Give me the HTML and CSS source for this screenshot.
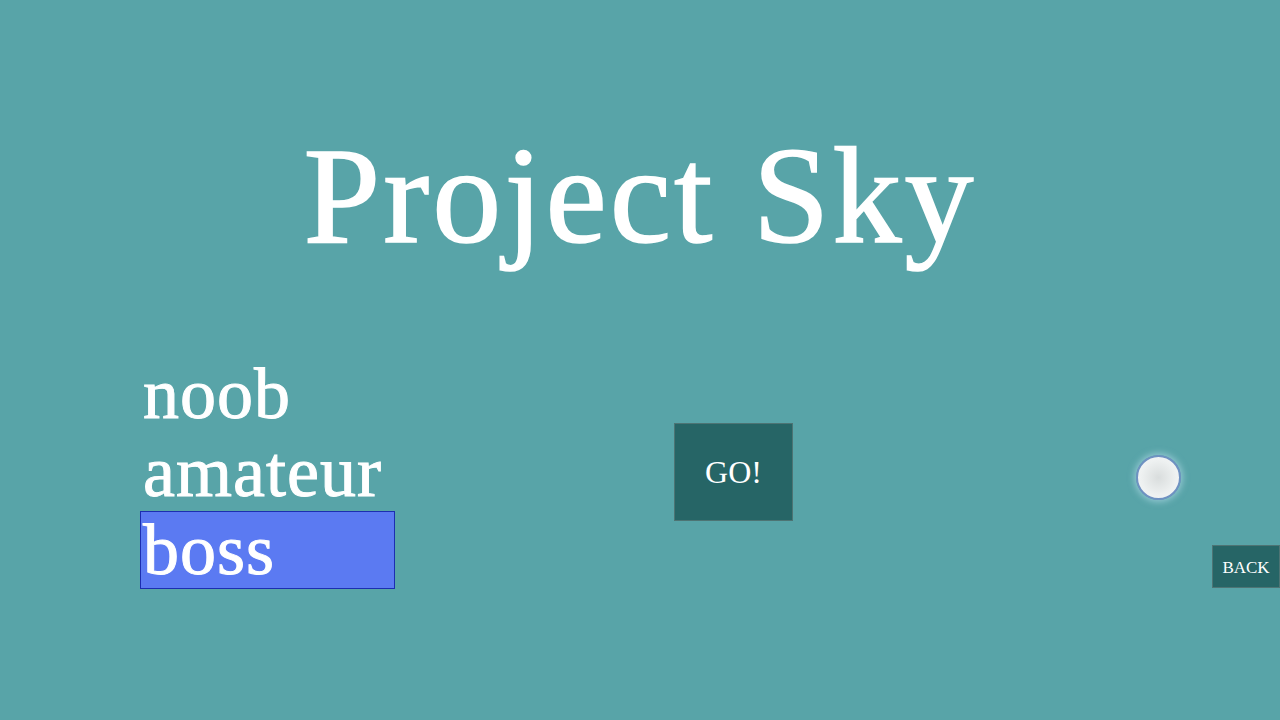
FILE: index.html
```html
<!DOCTYPE html>
<html>
<head>
<meta charset="utf-8">
<title>Project Sky</title>
<link rel="stylesheet" href="styles.css">
</head>
<body>
<div class="screen">
  <h1 class="title">Project Sky</h1>
  <div class="row">
    <ul class="levels">
      <li class="level">noob</li>
      <li class="level">amateur</li>
      <li class="level selected">boss</li>
    </ul>
    <button class="go">GO!</button>
    <div class="knob"></div>
    <button class="back">BACK</button>
  </div>
</div>
</body>
</html>
```
FILE: styles.css
```css
html, body {
  margin: 0;
  padding: 0;
}
body {
  background: #58a4a8;
  width: 1280px;
  height: 720px;
  overflow: hidden;
  font-family: "Liberation Serif", "DejaVu Serif", serif;
  color: #ffffff;
}
.screen {
  display: flex;
  flex-direction: column;
  height: 720px;
}
.title {
  margin: 127px 0 0 0;
  font-weight: normal;
  font-size: 138px;
  line-height: 138px;
  text-align: center;
  letter-spacing: 3px;
  -webkit-text-stroke: 1.5px #ffffff;
}
.row {
  display: flex;
  align-items: center;
  margin-top: 90px;
  padding-left: 140px;
}
.levels {
  list-style: none;
  margin: 0;
  padding: 0;
  width: 255px;
}
.level {
  box-sizing: border-box;
  height: 78px;
  font-size: 72px;
  line-height: 76px;
  padding-left: 2px;
  border: 1px solid transparent;
  white-space: nowrap;
  letter-spacing: 1px;
  -webkit-text-stroke: 1px #ffffff;
}
.level.selected {
  background: #5b7af2;
  border-color: #1c2eb0;
}
.go {
  margin-left: 279px;
  width: 119px;
  height: 98px;
  background: #266566;
  border: 1px solid #4d7474;
  color: #ffffff;
  font-family: "Liberation Serif", "DejaVu Serif", serif;
  font-size: 32px;
  padding: 0;
}
.knob {
  box-sizing: border-box;
  margin-left: 343px;
  margin-top: 10px;
  width: 45px;
  height: 45px;
  border-radius: 50%;
  border: 2px solid #6f92c2;
  background: radial-gradient(circle at 50% 50%, #d9dddd 0%, #eef1f1 60%, #f6f8f8 100%);
  box-shadow: 0 0 6px 2px rgba(190, 225, 240, 0.55);
}
.back {
  align-self: flex-end;
  margin-left: auto;
  margin-bottom: 1px;
  width: 68px;
  height: 43px;
  background: #266566;
  border: 1px solid #4d7474;
  color: #ffffff;
  font-family: "Liberation Serif", "DejaVu Serif", serif;
  font-size: 17px;
  padding: 2px 0 0 0;
}
```
